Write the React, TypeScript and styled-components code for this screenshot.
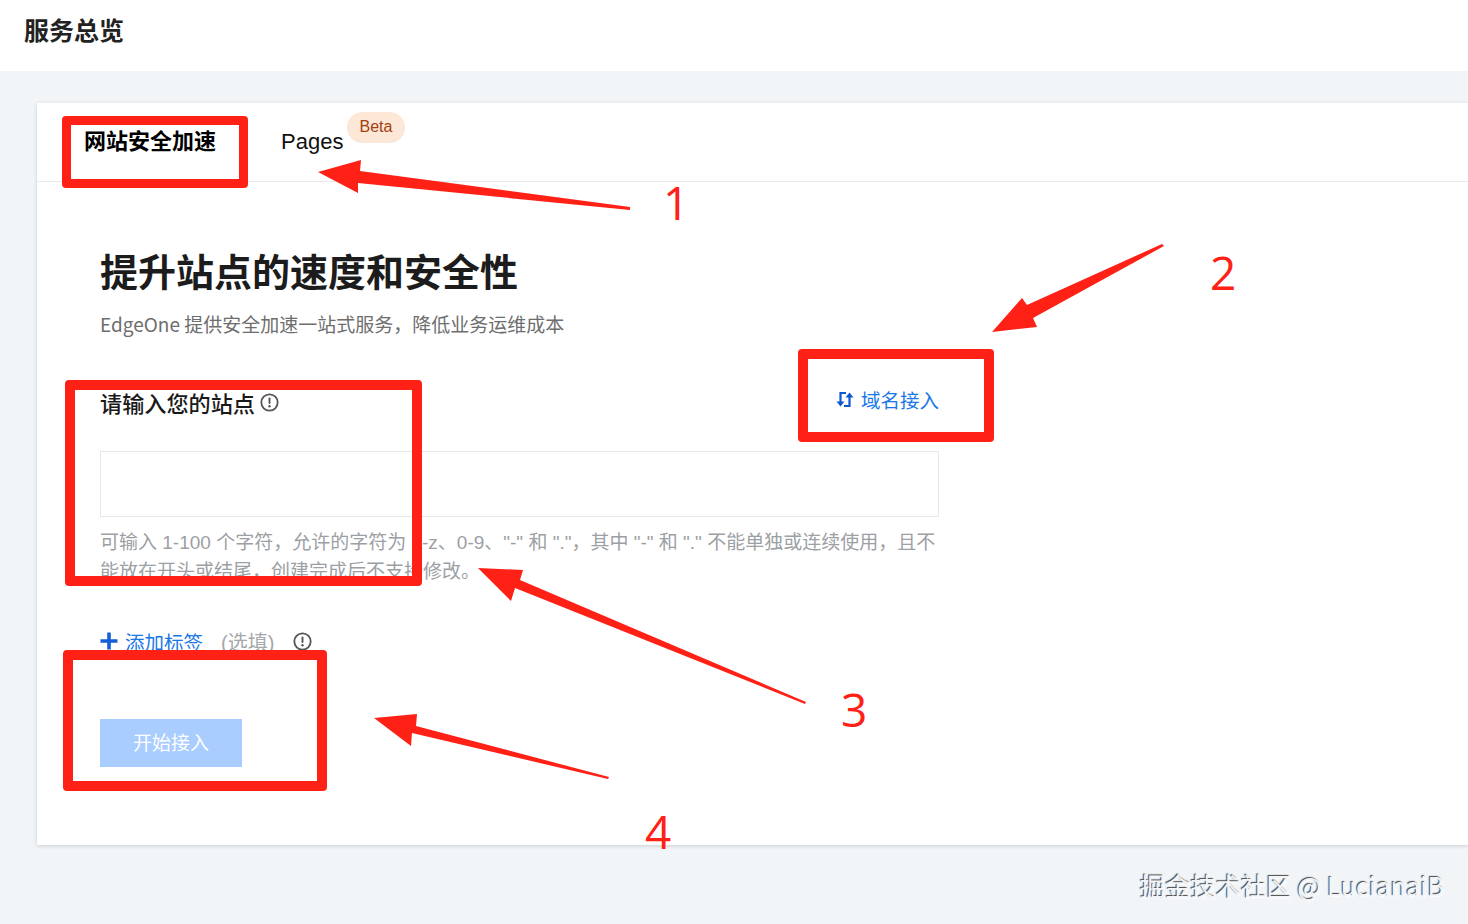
import React from 'react';
import styled, { createGlobalStyle } from 'styled-components';

const GlobalStyle = createGlobalStyle`
    html, body {
        margin: 0;
        padding: 0;
        background-color: #f2f5f8;
    }
    body {
        font-family: "Liberation Sans", "Noto Sans CJK SC", sans-serif;
    }
`;

const Page = styled.div`
    position: relative;
    width: 1468px;
    height: 924px;
    overflow: hidden;
    background-color: #f2f5f8;
`;

const Header = styled.header`
    height: 71px;
    box-sizing: border-box;
    padding-left: 24px;
    display: flex;
    align-items: center;
    padding-bottom: 14px;
    background-color: #fff;
`;

const PageTitle = styled.h1`
    margin: 0;
    font-family: "Noto Sans CJK SC", sans-serif;
    font-size: 25px;
    line-height: 36px;
    font-weight: 700;
    color: #222;
`;

const Content = styled.main`
    padding: 32px 0 0 37px;
`;

const Card = styled.section`
    height: 742px;
    background-color: #fff;
    box-shadow: 0 1px 4px rgba(0, 0, 0, 0.16);
`;

const Tabs = styled.nav`
    height: 79px;
    box-sizing: border-box;
    padding: 21px 0 0 47px;
    display: flex;
    align-items: flex-start;
    border-bottom: 1px solid #e8e9eb;
`;

const Tab = styled.div<{ $active?: boolean }>`
    position: relative;
    font-family: "Liberation Sans", "Noto Sans CJK SC", sans-serif;
    font-size: 22px;
    line-height: 36px;
    font-weight: ${(p) => (p.$active ? 700 : 400)};
    color: ${(p) => (p.$active ? '#000' : '#111')};
    margin-right: 65px;
`;

const Badge = styled.span`
    position: absolute;
    left: 66px;
    top: -12px;
    width: 58px;
    height: 31px;
    border-radius: 16px;
    background-color: #fde7d7;
    color: #a3400f;
    font-size: 16px;
    line-height: 30px;
    text-align: center;
`;

const Body = styled.div`
    width: 839px;
    padding: 61px 0 0 63px;
`;

const Heading = styled.h2`
    margin: 0;
    font-family: "Noto Sans CJK SC", sans-serif;
    font-size: 38px;
    line-height: 54px;
    font-weight: 700;
    color: #1c1c1c;
`;

const Subtitle = styled.p`
    margin: 13px 0 0;
    font-family: "Noto Sans CJK SC", sans-serif;
    font-size: 19px;
    line-height: 28px;
    color: #6e6e6e;
`;

const LabelRow = styled.div`
    margin-top: 48px;
    height: 32px;
    display: flex;
    align-items: center;
    justify-content: space-between;
`;

const Label = styled.div`
    display: flex;
    align-items: center;
    gap: 5px;
    font-family: "Noto Sans CJK SC", sans-serif;
    font-size: 22.15px;
    font-weight: 500;
    color: #1a1a1a;
`;

const DomainLink = styled.a`
    display: flex;
    align-items: center;
    gap: 7px;
    margin-top: -5px;
    font-family: "Noto Sans CJK SC", sans-serif;
    font-size: 19.5px;
    color: #1a78e6;
`;

const SiteInput = styled.input`
    display: block;
    width: 100%;
    height: 66px;
    margin-top: 33px;
    box-sizing: border-box;
    background-color: #fff;
    border: 1px solid #e6e7e9;
    outline: none;
`;

const Help = styled.p`
    margin: 12px 0 0;
    font-size: 19px;
    line-height: 28.5px;
    color: #9c9fa4;
`;

const TagRow = styled.div`
    margin-top: 39px;
    height: 32px;
    display: flex;
    align-items: center;
`;

const AddTag = styled.a`
    display: flex;
    align-items: center;
    gap: 7px;
    font-size: 19.5px;
    color: #1a78e6;
`;

const Optional = styled.span`
    margin-left: 18px;
    margin-right: 19px;
    font-size: 20px;
    color: #a5a7aa;
`;

const SubmitButton = styled.button`
    display: block;
    width: 142px;
    height: 48px;
    margin-top: 62px;
    padding: 0 0 4px;
    border: none;
    background-color: #a9cdff;
    color: #fff;
    font-family: "Noto Sans CJK SC", sans-serif;
    font-size: 19px;
`;

const Watermark = styled.div`
    position: absolute;
    left: 1140px;
    top: 867px;
    font-family: "Noto Sans CJK SC", sans-serif;
    font-size: 25px;
    line-height: 36px;
    letter-spacing: 0.25px;
    white-space: nowrap;
    color: #f4f5f8;
    text-shadow: -1px -1px 1px #444, 1px 1px 1px rgba(255, 255, 255, 0.8);
`;

const Frame = styled.div<{ $x: number; $y: number; $w: number; $h: number; $b: number }>`
    position: absolute;
    left: ${(p) => p.$x}px;
    top: ${(p) => p.$y}px;
    width: ${(p) => p.$w}px;
    height: ${(p) => p.$h}px;
    box-sizing: border-box;
    border: ${(p) => p.$b}px solid #ff2016;
    border-radius: 4px;
`;

const Arrows = styled.svg`
    position: absolute;
    left: 0;
    top: 0;
`;

const Num = styled.span<{ $x: number; $y: number }>`
    position: absolute;
    left: ${(p) => p.$x}px;
    top: ${(p) => p.$y}px;
    font-family: "Open Sans", sans-serif;
    font-size: 46px;
    line-height: 50px;
    font-weight: 400;
    color: #ff2016;
`;

const InfoIcon = () => (
    <svg width="19" height="19" viewBox="0 0 20 20" fill="none">
        <circle cx="10" cy="10" r="8.6" stroke="#555" strokeWidth="1.9" />
        <rect x="9" y="4.8" width="2" height="6.8" rx="1" fill="#555" />
        <circle cx="10" cy="14" r="1.25" fill="#555" />
    </svg>
);

const SwapIcon = () => (
    <svg width="18" height="17" viewBox="0 0 18 17" fill="none" stroke="#0f57cf" strokeWidth="2.2">
        <path d="M4.5 13V2H10" />
        <path d="M13.5 4V15H8" />
        <path d="M0.5 10.5L4.5 15.5L8.5 10.5Z" fill="#0f57cf" strokeWidth="0" />
        <path d="M9.5 6.5L13.5 1.5L17.5 6.5Z" fill="#0f57cf" strokeWidth="0" />
    </svg>
);

const PlusIcon = () => (
    <svg width="18" height="18" viewBox="0 0 18 18">
        <path d="M7.2 0.5H10.8V7.2H17.5V10.8H10.8V17.5H7.2V10.8H0.5V7.2H7.2Z" fill="#1560d8" />
    </svg>
);

const frames = [
    { x: 62, y: 116, w: 186, h: 72, b: 9 },
    { x: 798, y: 349, w: 196, h: 93, b: 10 },
    { x: 65, y: 380, w: 357, h: 206, b: 10 },
    { x: 63, y: 650, w: 264, h: 141, b: 10 },
];

const arrows = [
    '318,172 361,160 360,171 630,207 630,210 358,183 358,193',
    '992,332 1022,298 1027,305 1162,244 1164,246 1033,318 1037,327',
    '478,568 523,570 520,580 806,702 805,704 515,588 511,601',
    '374,718 417,714 416,726 609,777 608,779 412,733 411,746',
];

const numbers = [
    { n: '1', x: 663, y: 177 },
    { n: '2', x: 1210, y: 247 },
    { n: '3', x: 841, y: 684 },
    { n: '4', x: 645, y: 806 },
];

export default function App() {
    return (
        <Page>
            <GlobalStyle />
            <Header>
                <PageTitle>服务总览</PageTitle>
            </Header>
            <Content>
                <Card>
                    <Tabs>
                        <Tab $active>网站安全加速</Tab>
                        <Tab>
                            Pages
                            <Badge>Beta</Badge>
                        </Tab>
                    </Tabs>
                    <Body>
                        <Heading>提升站点的速度和安全性</Heading>
                        <Subtitle>EdgeOne 提供安全加速一站式服务，降低业务运维成本</Subtitle>
                        <LabelRow>
                            <Label>
                                请输入您的站点
                                <InfoIcon />
                            </Label>
                            <DomainLink>
                                <SwapIcon />
                                域名接入
                            </DomainLink>
                        </LabelRow>
                        <SiteInput type="text" />
                        <Help>
                            可输入 1-100 个字符，允许的字符为 a-z、0-9、"-" 和 "."，其中 "-" 和 "." 不能单独或连续使用，且不能放在开头或结尾，创建完成后不支持修改。
                        </Help>
                        <TagRow>
                            <AddTag>
                                <PlusIcon />
                                添加标签
                            </AddTag>
                            <Optional>(选填)</Optional>
                            <InfoIcon />
                        </TagRow>
                        <SubmitButton type="button">开始接入</SubmitButton>
                    </Body>
                </Card>
            </Content>
            <Watermark>掘金技术社区 @ LucianaiB</Watermark>
            {frames.map((f) => (
                <Frame key={f.x} $x={f.x} $y={f.y} $w={f.w} $h={f.h} $b={f.b} />
            ))}
            <Arrows width="1468" height="924" viewBox="0 0 1468 924">
                {arrows.map((points) => (
                    <polygon key={points} points={points} fill="#ff2016" />
                ))}
            </Arrows>
            {numbers.map((item) => (
                <Num key={item.n} $x={item.x} $y={item.y}>
                    {item.n}
                </Num>
            ))}
        </Page>
    );
}
